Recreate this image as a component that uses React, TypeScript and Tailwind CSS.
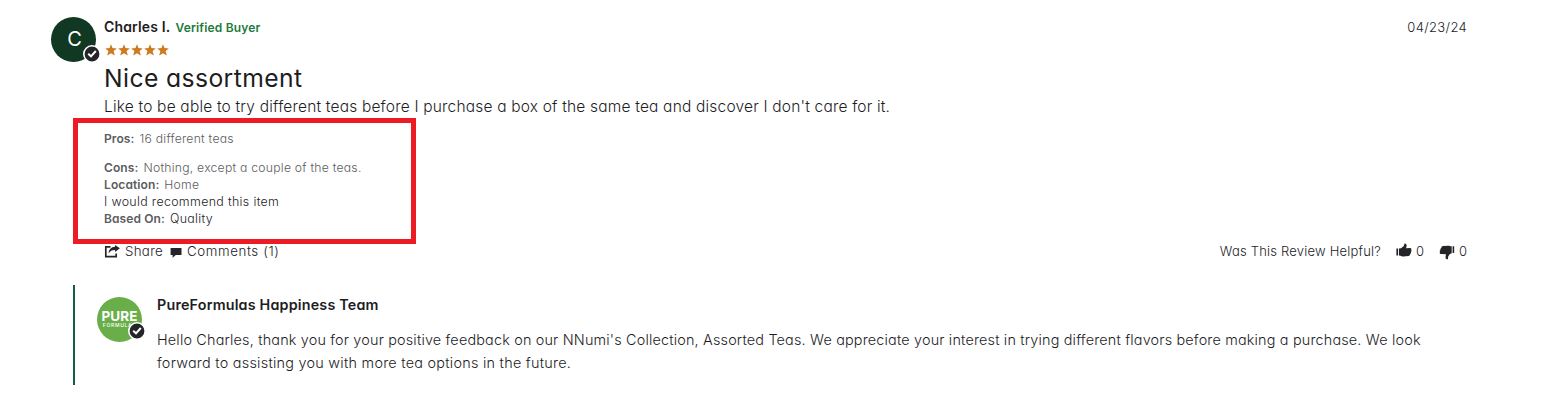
import type { ReactNode } from "react";

function CheckBadge({ raised = false }: { raised?: boolean }) {
  return (
    <svg
      viewBox="0 0 18 18"
      className={raised ? "absolute -right-1 bottom-0.5 h-[18px] w-[18px]" : "absolute -right-[5px] -bottom-px h-[18px] w-[18px]"}
    >
      <circle cx="9" cy="9" r="8.2" fill="#252529" stroke="#fff" strokeWidth="1.6" />
      <path d="M5.2 8.8 8 11.3 12.8 6" fill="none" stroke="#fff" strokeWidth="2" />
    </svg>
  );
}

function Star() {
  return (
    <svg viewBox="0 0 12 12" className="h-3 w-3" fill="#ce7a1e">
      <path d="M6 .2 7.500 4.100 11.800 4.400 8.600 7.100 9.800 11.500 6 9.200 2.200 11.500 3.400 7.100.2 4.400 4.500 4.100Z" />
    </svg>
  );
}

function ShareIcon() {
  return (
    <svg viewBox="0 0 16 14" className="mb-0.5 h-3.5 w-4" fill="#252529">
      <path d="M6.500 2.900H1.800V12.600H12.200V9.600" fill="none" stroke="#252529" strokeWidth="1.700" />
      <path d="M11 .9 15.900 4.300 11 7.900V6C8 6 6 7 4.600 9.600 4.600 5.400 7.200 2.900 11 2.700Z" />
    </svg>
  );
}

function CommentIcon() {
  return (
    <svg viewBox="0 0 12 11" className="h-[11px] w-3" fill="#252529">
      <path d="M.6.9H11.500V8H5.800L2.600 10.800V8H.6Z" />
    </svg>
  );
}

function ThumbUpIcon() {
  return (
    <svg viewBox="0 0 16 15" className="mb-[3px] h-[15px] w-4" fill="#252529">
      <path d="M.4 5.500H2.100V12.600H.4ZM3 5.600 5 5.300 7.800 3 8.500.6C9.900.4 10.800 1.600 10.600 3.200L10 5.300 14.200 4.900C15.400 5 15.800 6.200 15.100 6.900 15.700 7.600 15.600 8.600 14.900 9 15.200 10 14.800 10.700 14.100 11 14.200 12 13.500 12.700 12.600 12.900L7.400 13.600C6 13.700 5 12.900 3 12.600Z" />
    </svg>
  );
}

function ThumbDownIcon() {
  return (
    <svg viewBox="0 0 16 15" className="h-[15px] w-4" fill="#252529">
      <path d="M13.600 1.300H15.200V8H13.600ZM12.700 1.300V8.300L10.600 9.300 9.200 11.400 8.900 14.300C7.200 14.500 6.300 13.200 6.600 11.500L7 9.300 2.200 9.100C.8 9 .3 7.800 1.100 7.100.4 6.300.7 5.200 1.500 4.900 1.100 4 1.600 3.100 2.400 2.900 2.300 2 3 1.200 4 1.100L9.200.7C10.400.7 11 1.200 12.700 1.300Z" />
    </svg>
  );
}

function Detail({ label, children, dark = false }: { label: string; children: ReactNode; dark?: boolean }) {
  return (
    <p className="text-[#5c5c5e]">
      <span className="mr-[5px] font-semibold tracking-[0.1px]">{label}</span>
      <span className={dark ? "text-[12.4px] tracking-[0.34px] text-[#1d1d1f]" : "text-[12.2px] tracking-[0.24px]"}>
        {children}
      </span>
    </p>
  );
}

export default function App() {
  return (
    <main className="h-[404px] w-[1550px] overflow-hidden bg-white pt-[17px] pr-[83px] pl-[51px] font-['Inter',sans-serif] font-light whitespace-nowrap text-[#1d1d1f] [font-feature-settings:'cv11']">
      <article className="flex gap-2">
        <div className="relative flex h-[45px] w-[45px] shrink-0 items-center justify-center rounded-full bg-[#103822] pb-0.5 pl-0.5 text-xl font-normal text-white">
          C
          <CheckBadge />
        </div>
        <div className="grow">
          <header className="flex h-5 items-center justify-between text-[13px]">
            <div className="flex items-center gap-[5px]">
              <h2 className="text-sm font-semibold tracking-[0.15px]">Charles I.</h2>
              <span className="pt-0.5 text-xs font-semibold tracking-[0.18px] text-[#1c7a3b]">Verified Buyer</span>
            </div>
            <time className="pt-0.5 tracking-[0.32px]">04/23/24</time>
          </header>
          <div className="flex h-[26px] items-center gap-px pl-px">
            <Star />
            <Star />
            <Star />
            <Star />
            <Star />
          </div>
          <h3 className="h-7 text-[24.7px] leading-[30px] font-normal tracking-[0.4px]">Nice assortment</h3>
          <p className="h-[27px] text-[15.5px] leading-8 tracking-[0.19px]">
            Like to be able to try different teas before I purchase a box of the same tea and discover I don't care for it.
          </p>
          <div className="relative h-[126px] pt-3 text-xs leading-[17px]">
            <div className="absolute top-0 -left-[31px] h-[126px] w-[343px] border-[5px] border-[#ed1c24]" />
            <Detail label="Pros:">16 different teas</Detail>
            <div className="mt-3">
              <Detail label="Cons:">Nothing, except a couple of the teas.</Detail>
              <Detail label="Location:">Home</Detail>
              <p className="text-[12.4px] tracking-[0.34px]">I would recommend this item</p>
              <Detail label="Based On:" dark>Quality</Detail>
            </div>
          </div>
          <footer className="flex h-4 items-center justify-between text-[13px]">
            <div className="flex items-center">
              <ShareIcon />
              <span className="ml-[5px] text-[13.3px] tracking-[0.3px]">Share</span>
              <span className="mr-[5px] ml-[7px]"><CommentIcon /></span>
              <span className="text-[13.3px] tracking-[0.6px]">Comments (1)</span>
            </div>
            <div className="flex items-center">
              <span className="mr-[15px] tracking-[0.2px]">Was This Review Helpful?</span>
              <ThumbUpIcon />
              <span className="mr-[15px] ml-1">0</span>
              <ThumbDownIcon />
              <span className="ml-1">0</span>
            </div>
          </footer>
        </div>
      </article>
      <section className="mt-[25px] ml-[22px] flex h-[100px] gap-[15px] border-l-2 border-[#175c43] pt-3 pl-[22px]">
        <div className="relative flex h-[45px] w-[45px] shrink-0 flex-col items-center justify-center rounded-full bg-[#6aae49] pb-px text-white">
          <span className="text-[13.5px] leading-[13px] font-bold tracking-[0.1px]">PURE</span>
          <span className="text-[5px] leading-[5px] font-medium tracking-[0.7px]">FORMULAS</span>
          <CheckBadge raised />
        </div>
        <div>
          <h2 className="text-[14.3px] leading-4 font-semibold tracking-[0.2px]">PureFormulas Happiness Team</h2>
          <p className="mt-[15px] text-[14.4px] leading-[23px] tracking-[0.18px]">
            Hello Charles, thank you for your positive feedback on our NNumi's Collection, Assorted Teas. We appreciate your interest in trying different flavors before making a purchase. We look
            <br />
            <span className="tracking-[0.26px]">forward to assisting you with more tea options in the future.</span>
          </p>
        </div>
      </section>
    </main>
  );
}
